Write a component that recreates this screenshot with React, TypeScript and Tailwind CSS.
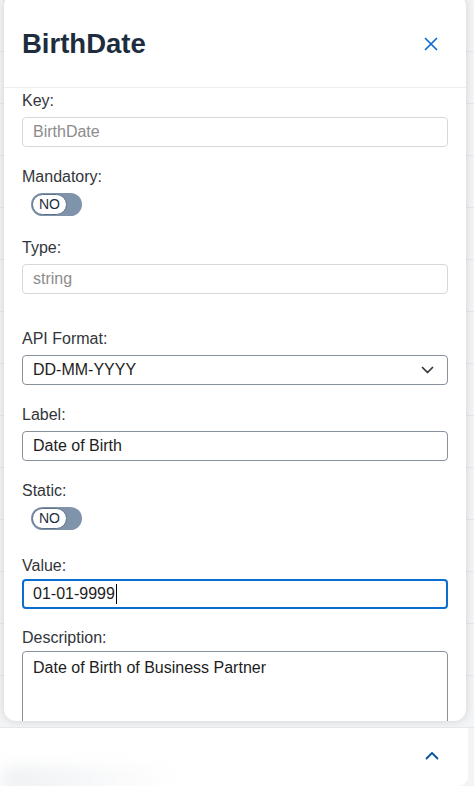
import React from 'react';

const font = { fontFamily: '"Liberation Sans", Arial, sans-serif' };

const Label = ({ children }: { children: React.ReactNode }) => (
    <div className="text-[16px] leading-[20px] text-[#32363a]">{children}</div>
);

const TextBox = ({ value, disabled, focused }: { value: string; disabled?: boolean; focused?: boolean }) => {
    let cls = 'border border-[#89919a] text-[#1d1d1d]';
    if (disabled) cls = 'border border-[#d5d8dc] text-[#8c8c8c]';
    if (focused) cls = 'border-2 border-[#0a6ed1] text-[#1d1d1d]';
    return (
        <div className={`mt-[6px] h-[30px] rounded-[4px] bg-white flex items-center ${focused ? 'pl-[9px]' : 'pl-[10px]'} text-[16px] ${cls}`}>
            <span>{value}</span>
            {focused && <span className="ml-[1px] inline-block w-px h-[20px] bg-black" />}
        </div>
    );
};

const Toggle = () => (
    <div className="mt-[6px] ml-[9px] w-[51px] h-[23px] rounded-full bg-[#7f93ab] flex items-center p-px">
        <div className="w-[35px] h-[21px] rounded-full bg-white border border-[#5f7189] flex items-center justify-center text-[14px] text-[#1d2d3e]">
            NO
        </div>
    </div>
);

export default function App() {
    return (
        <div style={font} className="relative w-[474px] h-[786px] overflow-hidden bg-[#f3f4f6]">
            {/* page behind the dialog */}
            <div className="flex flex-col h-full">
                <div className="flex-1 flex flex-col">
                    {Array.from({ length: 14 }).map((_, i) => (
                        <div key={i} className="h-[52px] border-b border-[#e6e8eb]" />
                    ))}
                </div>
                <div className="h-[60px] w-[468px] bg-white rounded-br-[10px] flex items-center justify-between pr-[29px] overflow-hidden">
                    <div className="h-[30px] w-[180px] self-end rounded-full bg-gradient-to-r from-[#eef0f2] to-white blur-[8px] translate-y-[10px]" />
                    <svg width="14" height="9" viewBox="0 0 14 9" fill="none" className="-mt-[4px]">
                        <path d="M1.5 7.5 7 2l5.5 5.5" stroke="#0854a0" strokeWidth="1.8" strokeLinecap="round" strokeLinejoin="round" />
                    </svg>
                </div>
            </div>

            {/* dialog */}
            <div className="absolute left-[4px] top-[-6px] w-[462px] h-[727px] bg-white rounded-[12px] shadow-[0_0_8px_rgba(0,0,0,0.14)] overflow-hidden flex flex-col">
                <div className="h-[94px] pt-[6px] shrink-0 flex items-center justify-between pl-[18px] pr-[28px] border-b border-[#eceef0]">
                    <h1 className="text-[27.5px] font-bold text-[#1d2d3e]">BirthDate</h1>
                    <svg width="14" height="14" viewBox="0 0 14 14" fill="none">
                        <path d="M1.5 1.5l11 11M12.5 1.5l-11 11" stroke="#0a6ed1" strokeWidth="1.7" strokeLinecap="round" />
                    </svg>
                </div>
                <div className="px-[18px] pt-[3px] flex flex-col">
                    <Label>Key:</Label>
                    <TextBox value="BirthDate" disabled />

                    <div className="mt-[20px]"><Label>Mandatory:</Label></div>
                    <Toggle />

                    <div className="mt-[22px]"><Label>Type:</Label></div>
                    <TextBox value="string" disabled />

                    <div className="mt-[35px]"><Label>API Format:</Label></div>
                    <div className="mt-[6px] h-[30px] rounded-[4px] bg-white border border-[#89919a] flex items-center justify-between pl-[10px] pr-[13px] text-[16px] text-[#1d1d1d]">
                        <span>DD-MM-YYYY</span>
                        <svg width="13" height="8" viewBox="0 0 13 8" fill="none">
                            <path d="M1.5 1.5 6.5 6.5l5-5" stroke="#32363a" strokeWidth="1.7" strokeLinecap="round" strokeLinejoin="round" />
                        </svg>
                    </div>

                    <div className="mt-[20px]"><Label>Label:</Label></div>
                    <TextBox value="Date of Birth" />

                    <div className="mt-[20px]"><Label>Static:</Label></div>
                    <Toggle />

                    <div className="mt-[26px]"><Label>Value:</Label></div>
                    <div className="-mt-[3px]">
                        <TextBox value="01-01-9999" focused />
                    </div>

                    <div className="mt-[19px]"><Label>Description:</Label></div>
                    <div className="mt-[3px] h-[120px] rounded-[4px] bg-white border border-[#89919a] px-[10px] pt-[5px] text-[16px] leading-[22px] text-[#1d1d1d]">
                        Date of Birth of Business Partner
                    </div>
                </div>
            </div>
        </div>
    );
}
